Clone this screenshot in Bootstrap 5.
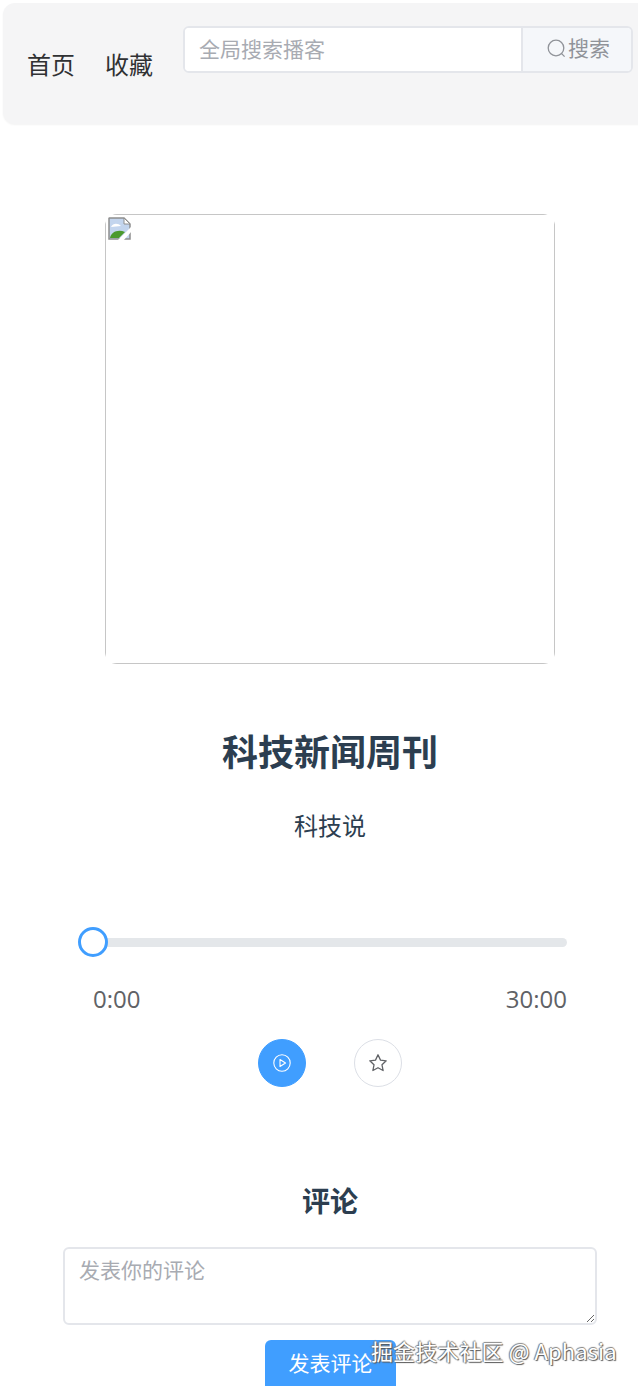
<!DOCTYPE html>
<html lang="zh">
<head>
<meta charset="utf-8">
<title>科技新闻周刊</title>
<link rel="stylesheet" href="https://cdn.jsdelivr.net/npm/bootstrap@5.3.0/dist/css/bootstrap.min.css">
<style>
html,body{height:1386px;overflow:hidden}
body{font-family:"Noto Sans CJK SC","Noto Sans",sans-serif;color:#2c3e50;background:#fff;position:relative}
.site-head{margin:3px 0 0 3px;height:121px;width:660px;background:#f5f5f6;border-radius:12px 0 0 12px;padding:23px 0 0 24px;box-shadow:0 1px 2px rgba(0,0,0,.05)}
.menu-link{font-size:24px;line-height:32px;color:#303133;text-decoration:none;margin-top:22px}
.menu-gap{gap:30px}
.search-wrap{margin-left:30px;width:450px;height:47px;border:2px solid #e4e6eb;border-radius:6px;background:#fff;overflow:hidden}
.search-input{flex:1;min-width:0;border:0;outline:0;font-size:21px;line-height:28px;padding:0 14px 3px;color:#606266;background:#fff}
.search-input::placeholder,.comment-box::placeholder{color:#a8abb2;opacity:1}
.search-btn{width:110px;border:0;border-left:2px solid #e4e6eb;background:#f5f7fa;color:#909399;font-size:21px;gap:2px;padding:0 0 3px 3px}
.main-area{width:660px}
.cover-frame{width:450px;height:450px;margin:90px auto 0;border-radius:12px;overflow:hidden}
.cover-outline{width:100%;height:100%;border:1px solid #c6c6c6;position:relative}
.cover-missing{position:absolute;left:2px;top:2px}
.pod-title{font-size:36px;line-height:48px;font-weight:700;margin:62px 0 0;color:#2c3e50}
.pod-author{font-size:24px;line-height:32px;margin:35px 0 0;color:#2c3e50}
.seek-row{margin:86px 93px 0 78px;height:30px;position:relative}
.seek-track{height:9px;border-radius:5px;background:#e4e7ea;margin-left:15px}
.seek-thumb{position:absolute;left:0;top:0;width:30px;height:30px;border:3px solid #409eff;border-radius:50%;background:#fff}
.time-row{margin:28px 93px 0 93px;font-size:24px;line-height:28px;color:#606266;font-family:"Open Sans","Noto Sans CJK SC",sans-serif}
.ctrl-row{margin-top:26px;gap:48px}
.round-btn{width:48px;height:48px;padding:0;border-radius:50%;border:1px solid #dcdfe6;background:#fff;color:#606266}
.round-btn.is-main{background:#409eff;border-color:#409eff;color:#fff}
.comment-title{font-size:28px;line-height:38px;font-weight:700;margin:94px 0 0;color:#2c3e50}
.comment-box{display:block;width:534px;height:78px;margin:28px 0 0 63px;border:2px solid #e4e6eb;border-radius:6px;padding:4px 14px;font-size:21px;line-height:32px;color:#606266;outline:0;resize:vertical}
.send-btn{display:block;width:131px;height:66px;margin:15px 0 0 265px;border:0;border-radius:6px 6px 0 0;background:#409eff;color:#fff;font-size:21px;padding:0 0 23px;line-height:28px}
.watermark{position:absolute;left:371px;top:1335px;font-size:22px;line-height:30px;letter-spacing:.1px;color:#fff;white-space:nowrap;text-shadow:1px 1px 1px #555,-1px 0 1px #777,0 -1px 1px #888}
</style>
</head>
<body>
<header class="site-head d-flex align-items-start">
  <nav class="d-flex menu-gap">
    <a class="menu-link" href="#">首页</a>
    <a class="menu-link" href="#">收藏</a>
  </nav>
  <form class="search-wrap d-flex">
    <input class="search-input" type="text" placeholder="全局搜索播客">
    <button class="search-btn d-flex align-items-center justify-content-center" type="button">
      <svg width="19" height="19" viewBox="0 0 19 19" fill="none" stroke="currentColor" stroke-width="1.3"><circle cx="9" cy="9" r="7.8"/><path d="M14.6 14.6l3 3"/></svg><span>搜索</span>
    </button>
  </form>
</header>
<main class="main-area">
  <div class="cover-frame">
    <div class="cover-outline">
      <svg class="cover-missing" width="24" height="24" viewBox="0 0 24 24"><path d="M1 1h15l6 6v15H1z" fill="#c3d5ee" stroke="#8e8e8e" stroke-width="1.5"/><path d="M16 1v6h6z" fill="#fff" stroke="#8e8e8e"/><path d="M3 10c2-4 7-4 10-1z" fill="#fff"/><path d="M2 21c1-6 8-9 15-6l-6 6z" fill="#4b9a2e"/><path d="M9 24L24 9v5L15 24z" fill="#fff"/></svg>
    </div>
  </div>
  <h1 class="pod-title text-center">科技新闻周刊</h1>
  <p class="pod-author text-center">科技说</p>
  <div class="seek-row d-flex flex-column justify-content-center">
    <div class="seek-track"></div>
    <div class="seek-thumb"></div>
  </div>
  <div class="time-row d-flex justify-content-between"><span>0:00</span><span>30:00</span></div>
  <div class="ctrl-row d-flex justify-content-center">
    <button class="round-btn is-main d-flex align-items-center justify-content-center" type="button" aria-label="播放">
      <svg width="18" height="18" viewBox="0 0 18 18" fill="none" stroke="currentColor" stroke-width="1.1"><circle cx="9" cy="9" r="8.2"/><path d="M7 5.5v7l5.5-3.5z" stroke-linejoin="round"/></svg>
    </button>
    <button class="round-btn d-flex align-items-center justify-content-center" type="button" aria-label="收藏">
      <svg width="20" height="20" viewBox="0 0 20 20" fill="none" stroke="currentColor" stroke-width="1.3" stroke-linejoin="round"><path d="M10 1.8l2.5 5.3 5.7.7-4.2 4 1.1 5.7-5.1-2.8-5.1 2.8 1.1-5.7-4.2-4 5.7-.7z"/></svg>
    </button>
  </div>
  <h2 class="comment-title text-center">评论</h2>
  <textarea class="comment-box" placeholder="发表你的评论"></textarea>
  <button class="send-btn" type="button">发表评论</button>
</main>
<div class="watermark">掘金技术社区 @ Aphasia</div>
<script src="https://cdn.jsdelivr.net/npm/bootstrap@5.3.0/dist/js/bootstrap.bundle.min.js"></script>
</body>
</html>
